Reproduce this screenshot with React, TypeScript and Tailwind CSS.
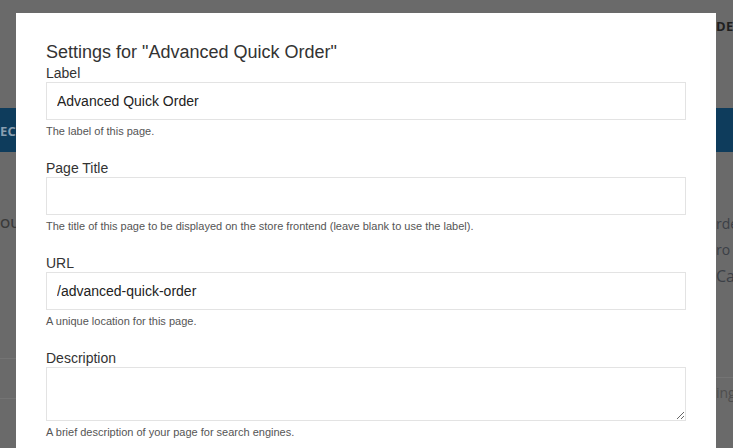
const FONT = { fontFamily: '"Liberation Sans", Arial, sans-serif' };

type FieldProps = {
  label: string;
  help: string;
  value?: string;
  multiline?: boolean;
};

function Field({ label, help, value = "", multiline }: FieldProps) {
  return (
    <div className="mb-[22px]">
      <label className="block text-[14px] leading-[17px] text-[#333]">{label}</label>
      {multiline ? (
        <textarea
          defaultValue={value}
          className="block h-[54px] w-full border border-[#e3e3e3] px-[10px] py-[8px] text-[14px] text-[#222] outline-none"
        />
      ) : (
        <input
          defaultValue={value}
          className="block h-[38px] w-full border border-[#e3e3e3] px-[10px] text-[14px] text-[#222] outline-none"
        />
      )}
      <p className="mt-[4px] text-[11px] leading-[14px] text-[#555]">{help}</p>
    </div>
  );
}

export default function App() {
  return (
    <div className="relative h-[448px] w-[733px] overflow-hidden bg-[#6a6a6a]">
      {/* page behind the overlay, only its edges show */}
      <div style={{ fontFamily: '"Open Sans", "Liberation Sans", sans-serif' }}>
        <div className="flex h-[108px] justify-end pt-[17px]">
          <div className="flex w-[17px] justify-start overflow-hidden">
            <span className="whitespace-nowrap text-[13px] font-bold tracking-wide text-[#1f1f1f]">
              DER
            </span>
          </div>
        </div>
        <div className="flex h-[44px] items-center bg-[#0e3c5c]">
          <div className="w-[16px] overflow-hidden">
            <span className="whitespace-nowrap text-[13px] font-bold tracking-wide text-[#8a9fb0]">
              ECTIONS
            </span>
          </div>
        </div>
        <div className="flex justify-between">
          <div className="w-[16px] overflow-hidden">
            <p className="mt-[62px] whitespace-nowrap text-[13px] font-semibold text-[#3a3a3a]">
              OUR
            </p>
            <div className="mt-[124px] border-t border-[#747474]" />
            <div className="mt-[39px] border-t border-[#747474]" />
          </div>
          <div className="w-[17px] overflow-hidden whitespace-nowrap text-[14px] leading-[26px] text-[#3b3f46]">
            <p className="mt-[59px]">rde</p>
            <p>ro</p>
            <p className="text-[16px]">Ca</p>
            <div className="mt-[88px] border-t border-[#747474]" />
            <p className="mt-[2px] text-[#4e4e4e]">ing</p>
          </div>
        </div>
      </div>

      {/* modal */}
      <div
        className="absolute left-[16px] top-[13px] h-[480px] w-[700px] bg-white px-[30px] pt-[29px]"
        style={FONT}
      >
        <h2 className="mb-[3px] text-[18px] leading-[20px] text-[#333]">
          Settings for "Advanced Quick Order"
        </h2>
        <Field label="Label" value="Advanced Quick Order" help="The label of this page." />
        <Field
          label="Page Title"
          help="The title of this page to be displayed on the store frontend (leave blank to use the label)."
        />
        <Field label="URL" value="/advanced-quick-order" help="A unique location for this page." />
        <Field
          label="Description"
          multiline
          help="A brief description of your page for search engines."
        />
      </div>
    </div>
  );
}
